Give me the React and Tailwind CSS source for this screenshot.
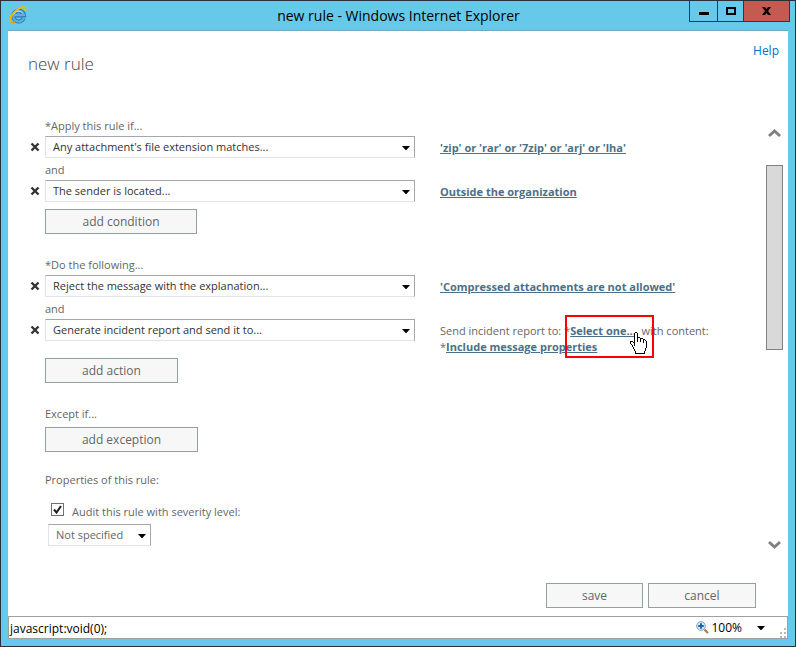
const HAND = [
  '.....XX..........',
  '....XooX.........',
  '....XooX.........',
  '....XooX.........',
  '....XooX.........',
  '....XooXXX.......',
  '....XooXooXXX....',
  '....XooXooXooXX..',
  '....XooXooXooXoX.',
  'XXX.XooXooXooXooX',
  'XooXXooooooooXooX',
  'XoooXoooooooooooX',
  '.XooXoooooooooooX',
  '..XoXoooooooooooX',
  '..XoooooooooooooX',
  '...XooooooooooooX',
  '...XoooooooooooX.',
  '....XooooooooooX.',
  '....XooooooooooX.',
  '.....XooooooooX..',
  '.....XooooooooX..',
  '.....XXXXXXXXXX..',
];

function HandCursor({ className }) {
  return (
    <svg className={className} width="17" height="22" viewBox="0 0 17 22" shapeRendering="crispEdges" aria-hidden="true">
      {HAND.flatMap((row, y) =>
        [...row].map((c, x) =>
          c === '.' ? null : <rect key={`${x}-${y}`} x={x} y={y} width="1" height="1" fill={c === 'X' ? '#000' : '#fff'} />
        )
      )}
    </svg>
  );
}

function IeLogo() {
  return (
    <svg width="18" height="18" viewBox="0 0 18 18" fill="none" aria-hidden="true">
      <path d="M14.600 12.200A5.400 5.400 0 1 1 15 9.400H6" stroke="#2b78b4" strokeWidth="4" />
      <path d="M14.800 12A5.400 5.400 0 1 1 15 9.200H5.500" stroke="#5fb0e0" strokeWidth="2.200" />
      <path d="M5 8.200A5 5 0 0 1 13.500 7" stroke="#cdeaf8" strokeWidth="0.900" />
      <path d="M2.400 16C-.6 14 2.600 7.800 8 3.800 11.800 1 15.800.2 16.400 2.200c.3.900 0 1.900-.4 2.800" stroke="#f5b800" strokeWidth="1.900" />
      <path d="M2.400 16c1 .7 2.600.3 4-.6" stroke="#e39b00" strokeWidth="1.500" />
    </svg>
  );
}

function DownTriangle({ className }) {
  return (
    <svg className={className} width="8" height="4" viewBox="0 0 8 4" aria-hidden="true">
      <path d="M0 0h8L4 4.500z" fill="#000" />
    </svg>
  );
}

function SelectBox({ label, value, className }) {
  return (
    <div className={`relative shrink-0 ${className}`}>
      <select
        aria-label={label}
        defaultValue={value}
        className="block h-[22px] w-full appearance-none border border-t-[#a6a6b0] border-r-[#a6a6b0] border-b-[#e2e2ea] border-l-[#e2e2ea] bg-white pt-px pr-4 pl-[7px]"
      >
        <option>{value}</option>
      </select>
      <DownTriangle className="pointer-events-none absolute top-[10px] right-[5px]" />
    </div>
  );
}

function RemoveButton({ label }) {
  return (
    <button type="button" aria-label={label} className="flex h-[22px] w-[17px] shrink-0 items-center pl-[2px]">
      <svg width="10" height="10" viewBox="0 0 10 10" aria-hidden="true">
        <path d="M1.500 1.500l7 7M8.500 1.500l-7 7" stroke="#333" strokeWidth="2.400" />
      </svg>
    </button>
  );
}

function RuleRow({ value, label, children }) {
  return (
    <div className="flex items-start">
      <RemoveButton label={`Remove ${value}`} />
      <SelectBox label={label} value={value} className="w-[370px] text-[#333]" />
      <div className="ml-[25px] min-w-0 flex-1 pt-1 leading-4">{children}</div>
    </div>
  );
}

function RuleLink({ children }) {
  return (
    <a href="#" className="font-bold text-[#4a7088] underline">
      {children}
    </a>
  );
}

function PushButton({ className, children }) {
  return (
    <button
      type="button"
      className={`block h-[25px] border border-[#93a1a1] bg-[#f7f7f7] text-[12px] leading-4 text-[#666] ${className}`}
    >
      {children}
    </button>
  );
}

function ScrollArrow({ d }) {
  return (
    <svg width="13" height="10" viewBox="0 0 13 10" fill="none" aria-hidden="true">
      <path d={d} stroke="#808080" strokeWidth="3" />
    </svg>
  );
}

function TitleBar() {
  return (
    <header className="flex h-[30px] items-start border-b border-[#6fa9c0]">
      <div className="flex flex-1 pt-[5px] pl-[1px]">
        <IeLogo />
      </div>
      <h1 className="pt-[5px] text-[14px] leading-5 text-black">new rule - Windows Internet Explorer</h1>
      <div className="flex flex-1 justify-end">
        <div className="mr-[-2px] flex h-[21px] border border-t-0 border-[#2b3a42]">
          <button type="button" aria-label="Minimize" className="flex w-[27px] items-end justify-center pb-[6px]">
            <svg width="10" height="3" aria-hidden="true"><path d="M0 0h10v3H0z" /></svg>
          </button>
          <button type="button" aria-label="Maximize" className="flex w-[26px] items-center justify-center border-l border-[#2b3a42]">
            <svg width="10" height="8" fill="none" aria-hidden="true"><path d="M1 1h8v6H1z" stroke="#000" strokeWidth="2" /></svg>
          </button>
          <button type="button" aria-label="Close" className="flex w-[46px] items-center justify-center border-l border-[#2b3a42] bg-[#c35b51]">
            <svg width="9" height="8" aria-hidden="true"><path d="M0 0h3l1.500 2L6 0h3L6 4l3 4H6L4.500 6 3 8H0l3-4z" /></svg>
          </button>
        </div>
      </div>
    </header>
  );
}

function StatusBar() {
  return (
    <footer className="flex h-[23px] items-center border border-[#a0a0a0] bg-white pl-px text-[12px] text-black">
      <span className="flex-1 pt-[2px]">javascript:void(0);</span>
      <svg width="13" height="13" viewBox="0 0 13 13" fill="none" aria-hidden="true">
        <path d="M8.500 8.500l3.500 3.500" stroke="#b5764a" strokeWidth="2.200" />
        <circle cx="5" cy="5" r="4.300" fill="#dcecf8" stroke="#7f9db5" />
        <path d="M5 2.200v5.600M2.200 5h5.600" stroke="#1565c0" strokeWidth="2" />
      </svg>
      <button type="button" className="flex items-center pl-[2px]">
        100%
        <DownTriangle className="ml-[15px]" />
      </button>
      <svg className="ml-[12px] self-end" width="10" height="10" fill="#b8b8b8" aria-hidden="true">
        <path d="M7 0h2v2H7zM7 4h2v2H7zM3 4h2v2H3zM7 8h2v2H7zM3 8h2v2H3z" />
      </svg>
    </footer>
  );
}

export default function App() {
  return (
    <div className="flex min-h-screen flex-col border border-[#2d2f38] bg-[#66c9e9] px-[7px] pb-[7px] font-['Open_Sans','Noto_Sans',sans-serif] text-[11px] text-[#666]">
      <TitleBar />
      <main className="flex flex-1 flex-col bg-white">
        <div className="flex items-start justify-between pt-3 pr-[9px] pl-5">
          <h2 className="pt-2 text-[17px] leading-[26px] font-light text-[#444]">new rule</h2>
          <a href="#" className="text-[12px] leading-4 text-[#0072c6]">Help</a>
        </div>
        <div className="flex flex-1 pt-[39px] pr-[5px] pl-5">
          <form className="min-w-0 flex-1">
            <p className="pl-[17px] leading-5">*Apply this rule if...</p>
            <RuleRow label="Condition 1" value="Any attachment's file extension matches...">
              <RuleLink>'zip' or 'rar' or '7zip' or 'arj' or 'lha'</RuleLink>
            </RuleRow>
            <p className="pt-[2px] pl-[17px] leading-5">and</p>
            <RuleRow label="Condition 2" value="The sender is located...">
              <RuleLink>Outside the organization</RuleLink>
            </RuleRow>
            <PushButton className="mt-[7px] ml-[17px] w-[152px]">add condition</PushButton>

            <p className="mt-[21px] pl-[17px] leading-5">*Do the following...</p>
            <RuleRow label="Action 1" value="Reject the message with the explanation...">
              <RuleLink>'Compressed attachments are not allowed'</RuleLink>
            </RuleRow>
            <p className="pt-[2px] pl-[17px] leading-5">and</p>
            <RuleRow label="Action 2" value="Generate incident report and send it to...">
              <div className="relative">
                <p>
                  Send incident report to: *<RuleLink>Select one...</RuleLink>, with content:
                </p>
                <p>
                  *<RuleLink>Include message properties</RuleLink>
                </p>
                <div className="pointer-events-none absolute top-[-8px] left-[125px] h-[43px] w-[89px] border-2 border-[#ff0000]">
                  <HandCursor className="absolute top-[15px] left-[63px]" />
                </div>
              </div>
            </RuleRow>
            <PushButton className="mt-[3px] ml-[17px] w-[133px]">add action</PushButton>

            <p className="mt-[21px] pl-[17px] leading-5">Except if...</p>
            <PushButton className="mt-[3px] ml-[17px] w-[153px]">add exception</PushButton>

            <p className="mt-[18px] pl-[17px] leading-5">Properties of this rule:</p>
            <div className="mt-3 flex items-start pl-[23px]">
              <div className="relative mt-px size-[13px]">
                <input
                  id="audit"
                  type="checkbox"
                  defaultChecked
                  className="block size-[13px] appearance-none border border-[#707070] bg-white"
                />
                <svg className="pointer-events-none absolute top-0 left-0" width="13" height="13" fill="none" aria-hidden="true">
                  <path d="M3 6.500l2.500 3L10 3" stroke="#212121" strokeWidth="2" />
                </svg>
              </div>
              <label htmlFor="audit" className="pl-2 leading-5">Audit this rule with severity level:</label>
            </div>
            <SelectBox label="Severity level" value="Not specified" className="ml-5 mt-[2px] w-[103px]" />
          </form>
          <div className="flex w-[17px] flex-col items-center pt-3 pb-1">
            <ScrollArrow d="M1 8l5.500-5L12 8" />
            <div className="mt-[27px] h-[185px] w-[17px] border border-[#808080] bg-[#d9d9d9]" />
            <div className="flex-1" />
            <ScrollArrow d="M1 2l5.500 5L12 2" />
          </div>
        </div>
        <div className="mt-[29px] flex justify-end gap-[5px] pr-8 pb-2">
          <PushButton className="w-[97px]">save</PushButton>
          <PushButton className="w-[108px]">cancel</PushButton>
        </div>
      </main>
      <StatusBar />
    </div>
  );
}
